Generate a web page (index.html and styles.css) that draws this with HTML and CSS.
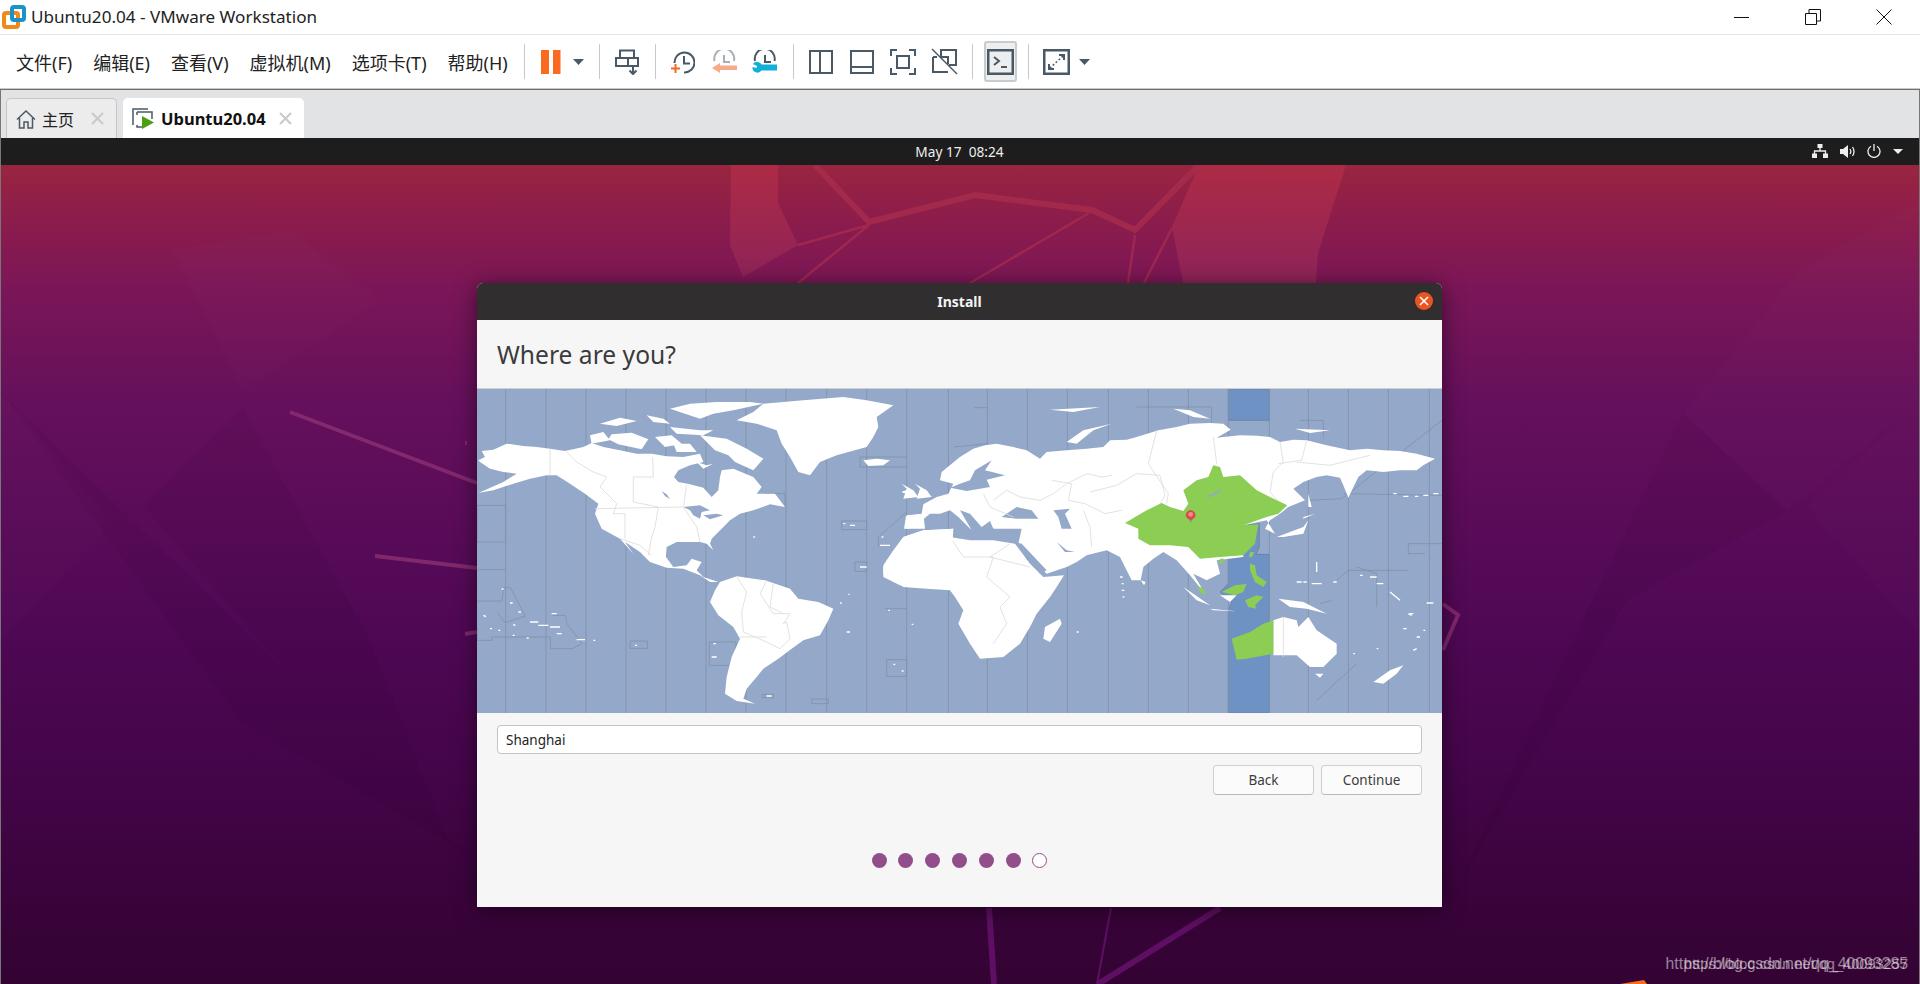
FILE: index.html
```html
<!DOCTYPE html>
<html lang="zh">
<head>
<meta charset="utf-8">
<title>Ubuntu20.04 - VMware Workstation</title>
<link rel="stylesheet" href="styles.css">
</head>
<body>
<div class="app">
  <header class="titlebar">
    <svg class="logo" width="26" height="26" viewBox="0 0 26 26"><rect class="logo-o" x="3" y="9" width="14" height="14" rx="2"/><rect class="logo-b" x="11" y="3" width="12" height="13" rx="2"/></svg>
    <span class="apptitle">Ubuntu20.04 - VMware Workstation</span>
    <div class="winctl">
      <svg width="16" height="16" viewBox="0 0 16 16"><path class="wc" d="M0 8.5h15"/></svg>
      <svg width="16" height="16" viewBox="0 0 16 16"><path class="wc" d="M.5 4.5h11v11H.5zM4 4V.5h11.5V12H12"/></svg>
      <svg width="16" height="16" viewBox="0 0 16 16"><path class="wc" d="M.5.5l15 15M15.5.5l-15 15"/></svg>
    </div>
  </header>
  <nav class="menubar">
    <span class="menu">文件(F)</span><span class="menu">编辑(E)</span><span class="menu">查看(V)</span><span class="menu">虚拟机(M)</span><span class="menu">选项卡(T)</span><span class="menu">帮助(H)</span>
    <i class="sep first"></i>
    <span class="ti pause"><svg width="20" height="24" viewBox="0 0 20 24"><rect class="orange" width="8" height="24"/><rect class="orange" x="12" width="7.5" height="24"/></svg></span>
    <span class="ti caret"><svg width="11" height="6" viewBox="0 0 11 6"><path class="slate-f" d="M0 0h11L5.5 6z"/></svg></span>
    <i class="sep"></i>
    <span class="ti"><svg width="24" height="26" viewBox="0 0 24 26"><path class="ic" d="M5 9V1.500h14V9M1 9h22v8H1zM13 9v8M18 18v7M14.500 21.500l3.500 3.500 3.500-3.500"/></svg></span>
    <i class="sep"></i>
    <span class="ti"><svg width="24" height="24" viewBox="0 0 24 24"><path class="ic" d="M3.500 13A10 10 0 1 1 13 22.500M13 6v7.500h6"/><path class="or" d="M0 18.500h9M4.500 14v9"/></svg></span>
    <span class="ti"><svg width="26" height="24" viewBox="0 0 26 24"><path class="ic light" d="M3.500 11A10 10 0 1 1 23 11M13 5v7h6"/><path class="salmon" d="M26 15.500H9V13l-8 5 8 5v-3h17z"/></svg></span>
    <span class="ti"><svg width="26" height="24" viewBox="0 0 26 24"><path class="ic" d="M3 11A10 10 0 1 1 22.500 11M13 5v7h6"/><path class="cyan" d="M25 14.500H9.500A5 5 0 0 0 1 14l4 2-.5 2-4-1a5 5 0 0 0 9 3.500H25z"/></svg></span>
    <i class="sep"></i>
    <span class="ti"><svg width="24" height="24" viewBox="0 0 24 24"><path class="ic" d="M1 1h22v22H1zM11 1v22"/></svg></span>
    <span class="ti"><svg width="24" height="24" viewBox="0 0 24 24"><path class="ic" d="M1 1h22v22H1zM1 17h22"/></svg></span>
    <span class="ti"><svg width="26" height="26" viewBox="0 0 26 26"><path class="ic" d="M1 7V1h6M19 1h6v6M25 19v6h-6M7 25H1v-6M7 7h12v12H7z"/></svg></span>
    <span class="ti"><svg width="27" height="27" viewBox="0 0 27 27"><path class="ic" d="M2 9v15h15M10 9V2h15v15h-7M10 9h7v7M2 9h4"/><path class="ic thin" d="M1 1l25 25"/></svg></span>
    <i class="sep"></i>
    <span class="ti on"><span class="onbox"><svg width="27" height="26" viewBox="0 0 27 26"><path class="ic heavy" d="M1 1h25v24H1z"/><path class="ic" d="M7 8l5 4-5 4M14 18h6"/></svg></span></span>
    <i class="sep"></i>
    <span class="ti"><svg width="27" height="26" viewBox="0 0 27 26"><path class="ic heavy" d="M1 1h25v24H1z"/><path class="ic" d="M16 6h5v5M6 15v5h5"/><path class="ic dot" d="M20 7L7 19"/></svg></span>
    <span class="ti caret2"><svg width="11" height="6" viewBox="0 0 11 6"><path class="slate-f" d="M0 0h11L5.500 6z"/></svg></span>
  </nav>
  <div class="tabs">
    <div class="tab home">
      <svg width="20" height="20" viewBox="0 0 20 20"><path class="ic1" d="M1 10.500L10 2l9 8.500M3.500 9v10h4.500v-6h4v6h4.500V9"/></svg>
      <span class="tabname">主页</span>
      <svg class="x" width="13" height="13" viewBox="0 0 13 13"><path class="xs" d="M1 1l11 11M12 1L1 12"/></svg>
    </div>
    <div class="tab active">
      <svg width="22" height="22" viewBox="0 0 22 22"><path class="ic1" d="M1 18V2h15M5 5v3M5 5h15v7M5 18v2h5"/><path class="play" d="M10 9l12 6.500L10 22z"/></svg>
      <b class="tabname vm">Ubuntu20.04</b>
      <svg class="x" width="13" height="13" viewBox="0 0 13 13"><path class="xs" d="M1 1l11 11M12 1L1 12"/></svg>
    </div>
  </div>
  <main class="guest">
    <div class="panel">
      <span class="clock">May 17&nbsp;&nbsp;08:24</span>
      <div class="tray">
        <svg width="16" height="14" viewBox="0 0 16 14"><path class="wf" d="M5.500 0h5v4h-5zM0 9.500h5V14H0zM11 9.500h5V14h-5z"/><path class="ws" d="M8 4v3M2.500 10V7h11v3"/></svg>
        <svg width="15" height="13" viewBox="0 0 15 13"><path class="wf" d="M0 4h3l5-4v13l-5-4H0z"/><path class="ws" d="M10 4c1 1.500 1 3.500 0 5M12.500 2c2 3 2 6 0 9"/></svg>
        <svg width="14" height="14" viewBox="0 0 14 14"><path class="ws" d="M7 0v7M4 2.200a6 6 0 1 0 6 0"/></svg>
        <svg width="10" height="5" viewBox="0 0 10 5"><path class="wf" d="M0 0h10L5 5z"/></svg>
      </div>
    </div>
    <div class="desktop">
      <svg class="wall" viewBox="0 165 1920 819" preserveAspectRatio="none">
        <defs>
          <linearGradient id="g" x1="0" y1="0" x2="0" y2="1">
            <stop offset="0" stop-color="#9a2540"/><stop offset=".07" stop-color="#8b1c4c"/><stop offset=".156" stop-color="#7a1658"/><stop offset=".29" stop-color="#65105c"/><stop offset=".556" stop-color="#500855"/><stop offset=".755" stop-color="#430548"/><stop offset=".955" stop-color="#360336"/><stop offset="1" stop-color="#330333"/>
          </linearGradient>
          <linearGradient id="s" x1="0" y1="0" x2="0" y2="1"><stop offset="0" stop-color="#ad2b45"/><stop offset="1" stop-color="#8e2358"/></linearGradient>
        </defs>
        <rect x="0" y="165" width="1920" height="819" fill="url(#g)"/>
        <polygon class="lite" points="173,250 243,391 380,300 290,230"/>
        <polygon class="lite" points="0,391 113,522 0,642"/>
        <polygon class="dark" points="143,506 243,408 370,640 447,838 290,675"/>
        <polygon class="dark" points="0,391 290,675 447,838 477,860 240,720"/>
        <polygon class="dark" points="1683,413 1787,511 1627,600 1460,882 1573,640"/>
        <polygon class="lite" points="1920,402 1807,506 1920,636"/>
        <polygon class="lite" points="1683,413 1800,270 1920,200 1920,402 1787,511"/>
        <polygon points="731,165 778,165 778,203 798,245 743,277 730,245" fill="url(#s)"/>
        <polygon points="1199,165 1346,165 1318,253 1316,283 1183,283 1172,227" fill="url(#s)"/>
        <path class="wl" d="M815 165l54 57 106-27 117 15 43 20 64-65"/>
        <path class="wl2" d="M869 225l-71 20M869 225l-71 58M1089 213l-119 70M1135 235l-7 48M1172 228l-28 55"/>
        <path class="wl3" d="M290 412L477 483M375 556l102 12M465 634l12-2"/>
        <path class="wl3" d="M465 443h2"/>
        <path class="wl3" d="M1443 604l15 11-15 35"/>
        <path class="wl4" d="M989 908l5 76M1220 908l-122 76"/>
        <path class="wl5" d="M1111 908l-14 76"/>
        <polygon class="orange" points="1620,984 1644,980 1647,984"/>
      </svg>
      <section class="win">
        <div class="wtitle"><b>Install</b><span class="wclose"><svg width="10" height="10" viewBox="0 0 10 10"><path class="wcx" d="M1 1l8 8M9 1L1 9"/></svg></span></div>
        <h1 class="where">Where are you?</h1>
        <svg class="map" width="965" height="324" viewBox="21 326 2895 972">
          <rect class="sea" x="21" y="326" width="2895" height="972"/>
          <g transform="translate(1440 0)">
            <path class="band" d="M835 326h123v94H835zM880 735l48-5v70l-10 22h40v476H835V990l10-25-35-30 25-25v-80h45z"/>
          </g>
          <path class="tz" d="M107 326V1298M228 326V1298M348 326V1298M468 326V1298M588 326V1298M708 326V1298M828 326V1298M948 326V1298M1070 326V1298M1190 326V1298M1310 326V1298M1435 326V1298M1552 326V600M1552 1135V1298M1672 326V1298M1792 326V1298M1915 326V1298M2035 326V1298M2155 326V1298M2275 326V1298M2398 326V1298M2515 326V1298M2635 326V1298M2755 326V1298M2878 326V1298"/>
          <path class="tz" d="M21 675h86v110H21zM21 868h86M21 962h75l5-40h20l45 85-60 20-25-30M21 1040v40h45v-10h175v35h65l30-15-45-60-5-25h-40M480 1082h52v22h-52zM718 1085h80v70h-80zM878 1242h32v10h-32zM1025 1256h50v14h-50zM1115 722h75v26h-75zM1155 845h35v28h-35zM1225 770l85-75M1225 770v30M1250 1138h60v50h-60zM1245 985h65M1170 530h140M1170 530v30h140M885 640h60v40M1552 382h-40M1552 490l-100 10M2000 380h225V450M2490 420h70V470M2515 660l100-5 320-250M2620 640l300 5M2815 790h100M2815 790v30h50M2660 860l60 20v100M2600 900l35-30h180M2550 970l35-10M2540 1260l120-110"/>
          <g transform="translate(1440 0)">
            <path class="land" d="M-132 708L-85 700-80 672-40 650-5 640 10 610-30 600-25 575 30 530 70 505 105 495 140 490 190 500 230 510 270 535 290 515 350 510 410 505 460 500 480 480 530 478 560 470 625 450 680 440 720 430 780 428 820 430 842 448 800 472 870 465 920 466 960 470 990 485 1030 478 1070 480 1130 495 1200 510 1250 505 1300 510 1350 512 1400 520 1455 535 1420 555 1400 570 1350 570 1300 575 1250 570 1225 590 1195 652 1180 615 1170 592 1130 585 1100 590 1060 605 1030 625 1065 660 1015 680 990 700 960 720 945 745 975 760 950 720 880 735 880 830 800 840 810 880 770 900 730 880 765 940 720 885 680 840 640 815 610 835 580 860 572 900 545 900 525 860 510 830 470 810 410 825 380 845 350 860 290 880 240 830 205 790 215 745 130 745 120 722 95 740 60 700 30 690 65 750 25 710 0 690-30 700-60 700-90 725-125 745-138 745Z"/>
            <path class="land" d="M-200 855L-170 810-140 770-80 750-40 748 10 745 0 770 60 780 130 780 195 790 240 850 280 890 342 885 320 920 300 950 260 1000 240 1040 225 1065 210 1090 160 1130 90 1135 60 1090 25 1030 40 990 15 950 0 930-70 925-140 920-200 880Z"/>
            <path class="land" d="M330 1015l5 15-35 55-20-10 5-35zM970 1020l30-10 40 10 5 20 30-30 25 40 60 40v30l-40 40h-40l-40-35h-70zM1095 1180h25l-10 12zM1270 1205l50-35 40-15-20 25-40 30zM980 770l80-30 15-20-15 40-60 10zM1060 710l35-10-35 15zM1075 640l10 40h-10zM700 920l80 55-40-15zM780 985l80 8-70-3zM810 945h50l-20 20zM985 955l75 10 70 35-60-15-50-5zM572 900l15 5-5 10zM350 485l50-35 85-20-55 20-50 40zM670 385l50 5 60 25-50-5zM300 388l150-8-80 15zM1035 445l105 5-60 8zM-145 610l35 20 15 20-45 5 10-30zM-145 635l25-10v20z"/>
            <path class="water" d="M0 622l30-12 30-10 15-30 50-30-20 30 60 15-55 13 10 22-70 12zM155 710l45-30 45 10 20 25h-65zM310 690l50-5-15 15 20 45h-30l-10-35zM195 785l20 5 75 80-20 10-30-40zM320 785l30 25 25 5h-30zM0 708l50 40 80-5-5 30H40z"/>
            <path class="gborder" d="M130 660l40-30 40 20 60 10 40-20 40-30 60-30 45 10 30-5M420 635l80-20 60-35 70 5 15 60-30 50-60 15M305 600l60 10-10 50 50 10 60 30 50-10M400 690l20 50 5 60M100 640l20 40 70 30M120 830l120 30M0 770l40 60 90 0-20 60 70 60-30 30 20 50-40 60M180 790l-60 40M620 450l-25 100 60 90-5 30M790 470l10 80M990 485l10 60-30 30-10 60 40 45M1070 480l-15 60-70 10M1040 545l100 10 120-30M1000 1010v120"/>
            <path class="green" d="M525 728L590 690 635 668 660 680 700 692 715 670 700 630 740 600 775 590 790 555 810 560 820 590 870 585 920 630 960 650 1012 675 985 700 950 710 880 735 925 732 915 790 880 825 810 830 750 835 715 800 660 795 600 795 565 775 565 745ZM900 815h12l-5 14-10 2zM810 835h12l-5 15-10 2zM900 850l15 5 5 30 30 20-10 15-25-15-15-35zM740 915l20 10 10 15h-15zM815 935l40-20 35-5-10 25-25 10zM885 960l35-15 20 5-25 25 5 10-25-5zM970 1020v100l-80 15-30 3-15-63 55-20 40-25z"/>
            <path class="water" d="M770 648l35-15 8-14-5 18-30 14z"/>
            <path class="pinstem" d="M722 715v10"/>
            <circle class="pin" cx="722" cy="704" r="13"/>
            <circle class="pinlight" cx="722" cy="702" r="7"/>
            <path class="isle" d="M510 890h8M515 910h6M515 930h8M518 950h5M1100 845v30M1040 905h15M1060 905h10M1085 910h30M1150 905h10M1230 885h8M1260 890h20M1280 910h20M1320 935l30 25M1380 1000h10M1360 1045h10M1420 1050h6M1400 1070h10M1375 1000l10 5M1430 968h20M1330 640h10M1360 648h15M1395 648h10M1420 645h15M1450 640h15M380 1055h6M1210 1120h5M1280 1105h5M1390 1110l10-5"/>
          </g>
          <path class="land" d="M25 540L45 530 35 512 70 508 110 490 160 497 200 500 240 505 285 512 340 500 365 488 400 500 450 510 500 520 545 520 590 528 640 530 690 520 700 545 660 555 625 570 612 590 625 605 660 612 700 622 725 650 745 630 750 590 755 570 790 565 850 590 875 620 860 640 915 640 945 680 900 672 850 690 810 700 780 720 755 745 725 775 720 790 730 810 710 790 690 785 620 785 590 800 588 830 610 860 650 855 665 835 695 845 680 870 700 890 745 905 720 905 690 885 640 865 590 862 540 845 510 815 465 785 490 820 450 775 395 745 375 700 385 670 345 640 300 610 260 585 230 585 180 595 130 610 70 630 25 638 100 605 140 580 100 575 60 565 30 545Z"/>
          <path class="land" d="M800 420L850 395 880 370 1000 360 1120 350 1190 360 1270 375 1220 410 1225 440 1210 470 1190 500 1100 525 1050 545 1020 585 985 575 960 530 935 490 920 450 860 430ZM1180 540l40-5 40 5-20 15-45 2zM750 905l50-17 85 12 75 25 25 30 60 10 45 20-15 35-25 45-50 15-35 25-40 30-45 30-20 25-30 35-10 30 35 15-55-8-35-22 5-50 15-60 25-55-20-35-45-35-25-40 15-35zM1335 610l35 20 15 20-45 5 10-30zM1295 635l25-10v20zM1310 705l50-5 5 45-55 0zM1240 860l60-90 60-20 90-5-10 175-150-5-50-25z"/>
          <path class="land" d="M360 465l40-10 20 25-55 10zM425 462l60-5 50 20-20 30-70-15-30-15zM390 430l60-18 50 10-60 15zM530 405l50 10 20 15-50-5zM600 385l60-15 80-5 100 0 40 5-90 20-60 10-40 15zM600 440l90 10 40 0-30 15-80-5zM555 470l50-5 30 25-50 10zM610 490l50 0 20 25-60 0zM690 465l80 10 60 30 50 30-30 35-55-25-20-20-40-15zM680 545l30 10 20-5-30 15z"/>
          <path class="water" d="M575 632l15 10 10 15-15-10zM640 680l50-5 30 15-25 5-5 20-20-10-10-15zM700 705l40-5 20 5-40 12z"/>
          <path class="bord" d="M240 505v80M290 515l30 30 50 30 40 15-20 30 50 50-10 30h35v75M490 590h60l-2-60M490 590v75l75 15-10 60-10 30-10 55M375 685l265-5 10-65M640 680l40 60 10 45M450 775l60 20 35 30M800 890l30 45-15 60 5 60 70 30 40 20 30-30-10-50-10 5 20-30h-50l-40-60 20-40M910 910l-10 70 40 20M810 1070l80 0"/>
          <path class="isle" d="M95 926h6M120 968h8M145 995h8M40 1005l8 4M130 1032l6 4M60 1045h6M85 1050h6M128 1065h6M170 1073h6M180 1025h25M205 1035h30M240 1040h30M260 1060h15M245 1000h15M320 1078h25M370 1080h6M495 1095h6M730 1090h8M725 1130h15M890 1247h15M1120 730h6M1140 735h15M1235 770h5M1230 795h30M1170 860h20M1130 1055h10M1110 968h5M1135 942h4M1255 990h5M1325 1032h5M1270 1152h6M1295 1172h6M850 770h5"/>
        </svg>
        <div class="form">
          <div class="entry">Shanghai</div>
          <div class="btnrow"><span class="btn">Back</span><span class="btn">Continue</span></div>
          <div class="dots"><i class="d"></i><i class="d"></i><i class="d"></i><i class="d"></i><i class="d"></i><i class="d"></i><i class="d open"></i></div>
        </div>
      </section>
      <span class="mark m1">https://blog.csdn.net/qq_40093285</span>
      <span class="mark m2">https://blog.csdn.net/qq_40093257</span>
    </div>
  </main>
</div>
</body>
</html>
```
FILE: styles.css
```css
*{box-sizing:border-box}
html,body{margin:0;height:100%;overflow:hidden}
body{font-family:"Noto Sans","Noto Sans CJK SC",sans-serif;background:#fff;color:#1a1a1a}
.app{display:flex;flex-direction:column;width:1920px;height:984px}

.titlebar{height:35px;flex:none;display:flex;align-items:center;padding-left:1px;background:#fff;border-bottom:1px solid #e4e4e4}
.logo{flex:none}
.logo-o{fill:none;stroke:#ef8a1a;stroke-width:4}
.logo-b{fill:none;stroke:#1c93c8;stroke-width:4}
.apptitle{margin-left:4px;font-size:17.100px;line-height:34px;color:#222}
.winctl{margin-left:auto;display:flex;gap:55px;padding-right:28px;align-items:center}
.wc{fill:none;stroke:#111;stroke-width:1}

.menubar{height:54px;flex:none;display:flex;align-items:center;padding-left:16px;background:#fff;border-bottom:1px solid #c9c9c9}
.menu{font-size:18px;margin-right:21px;color:#222;white-space:nowrap}
.sep{display:block;flex:none;width:1px;height:35px;background:#c6c8ca;margin:0 7px}
.sep.first{margin-left:-5px;margin-right:0}
.ti{flex:none;display:flex;width:41px;height:42px;align-items:center;justify-content:center}
.ti.pause{width:36px;margin-left:8px}
.ti.caret{width:20px;margin-right:3px}
.ti.caret2{width:14px;margin-left:1px}
.ic{fill:none;stroke:#4a5966;stroke-width:2}
.ic.light{stroke:#a7afb5}
.ic.heavy{stroke-width:3}
.ic.thin{stroke-width:1.500}
.ic.dot{stroke-dasharray:2 2;stroke-width:1.500}
.or{fill:none;stroke:#f26a25;stroke-width:2}
.orange{fill:#fb6a1f}
.slate-f{fill:#4a5966}
.salmon{fill:#f7ab8a}
.cyan{fill:#12b0d8}
.onbox{display:flex;width:33px;height:41px;align-items:center;justify-content:center;background:#eceeef;border:2px solid #c9cccf;border-radius:3px}

.tabs{height:49px;flex:none;display:flex;align-items:flex-end;padding-left:5px;gap:6px;background:#e2e3e5;border-top:1px solid #6f6f6f;border-left:1px solid #777;border-right:1px solid #777}
.tab{height:40px;display:flex;align-items:center;border-radius:5px 5px 0 0}
.tab.home{width:111px;padding-left:9px;background:#ececed;border:1px solid #c4c6c8;border-bottom:0}
.tab.active{width:181px;padding-left:9px;background:#fff}
.ic1{fill:none;stroke:#4a5966;stroke-width:1.500}
.play{fill:#4f9e12}
.tabname{font-size:16px;margin-left:6px;color:#222}
.tabname.vm{font-weight:700;font-size:16.500px;margin-left:7px;color:#111}
.x{margin-left:auto;margin-right:12px}
.xs{fill:none;stroke:#c9c9c9;stroke-width:2}

.guest{flex:1;min-height:0;display:flex;flex-direction:column;border-left:1px solid #777;border-right:1px solid #777}
.panel{height:27px;flex:none;position:relative;display:flex;align-items:center;justify-content:center;background:#1d1d1d}
.clock{font-size:13.700px;color:#eee;margin-left:-1px}
.tray{position:absolute;right:16px;top:6px;display:flex;align-items:center;gap:12px}
.wf{fill:#eee}
.ws{fill:none;stroke:#eee;stroke-width:1.300}
.desktop{flex:1;position:relative;overflow:hidden;background:#530856}
.wall{position:absolute;left:-1px;top:0;width:1920px;height:819px}
.lite{fill:#fff;fill-opacity:.012}
.dark{fill:#000;fill-opacity:.04}
.wl{fill:none;stroke:#a92d4e;stroke-width:6;stroke-opacity:.75}
.wl2{fill:none;stroke:#a92d4e;stroke-width:2.500;stroke-opacity:.7}
.wl3{fill:none;stroke:#8c2f73;stroke-width:4;stroke-opacity:.8}
.wl4{fill:none;stroke:#5e0f63;stroke-width:6}
.wl5{fill:none;stroke:#5e0f63;stroke-width:2}

.win{position:absolute;left:476px;top:118px;width:965px;height:624px;display:flex;flex-direction:column;background:#f6f6f6;border-radius:6px 6px 0 0;box-shadow:0 3px 22px rgba(0,0,0,.5)}
.wtitle{height:37px;flex:none;position:relative;display:flex;align-items:center;justify-content:center;background:#302e2e;border-radius:6px 6px 0 0}
.wtitle b{font-size:14px;color:#f4f4f4}
.wclose{position:absolute;right:9px;top:9px;display:flex;width:18px;height:18px;align-items:center;justify-content:center;border-radius:50%;background:#ea5420}
.wcx{fill:none;stroke:#fff;stroke-width:1.600}
.where{flex:none;height:69px;margin:0;padding:0 0 0 20px;display:flex;align-items:center;font-size:24.600px;font-weight:400;color:#3b3b3b;border-bottom:1px solid #cfcfcf}
.map{display:block;flex:none}
.sea{fill:#94a9c9}
.band{fill:#6f92c5;stroke:#64799b;stroke-width:2}
.tz{fill:none;stroke:#7f90aa;stroke-width:2.500}
.land{fill:#fff}
.water{fill:#94a9c9}
.green{fill:#8ccd53}
.bord,.gborder{fill:none;stroke:#dcdcdc;stroke-width:2.500}
.isle{fill:none;stroke:#fff;stroke-width:4}
.pin{fill:#e8474f;stroke:#c9343c;stroke-width:2}
.pinlight{fill:#f08b8e}
.pinstem{fill:none;stroke:#8d8d8d;stroke-width:6}

.form{flex:1;display:flex;flex-direction:column;padding:12px 20px 0 20px}
.entry{height:29px;flex:none;display:flex;align-items:center;padding-left:8px;font-size:13.500px;color:#222;background:#fff;border:1px solid #c4c4c4;border-radius:4px}
.btnrow{display:flex;flex:none;justify-content:flex-end;gap:7px;margin-top:11px}
.btn{display:flex;width:101px;height:30px;align-items:center;justify-content:center;font-size:13.500px;color:#3d3d3d;background:#fbfbfb;border:1px solid #cfcfcf;border-bottom-color:#b9b9b9;border-radius:4px}
.dots{display:flex;flex:none;justify-content:center;gap:11.800px;margin-top:58px}
.d{display:block;width:15px;height:15px;border-radius:50%;background:#924d8b}
.d.open{background:#fff;border:1.500px solid #924d8b}

.mark{position:absolute;font-family:"Liberation Sans",sans-serif;line-height:16px;color:rgba(255,255,255,.5);white-space:nowrap;top:791px}
.m1{right:11px;font-size:15.800px}
.m2{right:11px;font-size:14.600px}
```
